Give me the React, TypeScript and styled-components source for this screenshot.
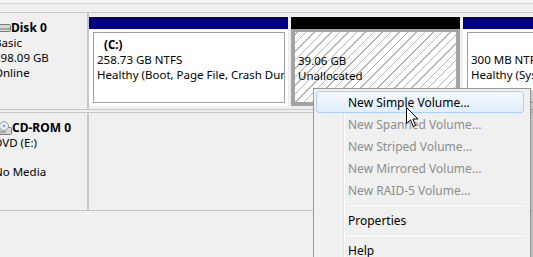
import React from "react";
import styled, { createGlobalStyle } from "styled-components";

const Global = createGlobalStyle`
  html, body { margin: 0; padding: 0; background: #f0f0f0; overflow: hidden; }
  body { font-family: "Noto Sans", "Liberation Sans", sans-serif; font-size: 11.5px; color: #000; }
`;

const Page = styled.div`
  position: relative;
  width: 533px;
  height: 257px;
  overflow: hidden;
  background: #f0f0f0;
`;

const TopStrip = styled.div`
  height: 3px;
  background: #f7f7f7;
  border-bottom: 1px solid #d5d5d5;
  margin-bottom: 8px;
`;

const Shift = styled.div`
  margin-left: -14px;
  display: flex;
  flex-direction: column;
  gap: 2px;
`;

const DiskRow = styled.div<{ $h: number }>`
  display: flex;
  height: ${(p) => p.$h}px;
  border-top: 1px solid #c8c8c8;
  border-bottom: 1px solid #c8c8c8;
`;

const Label = styled.div`
  width: 103px;
  flex: none;
  background: #f0f0f0;
  border-right: 2px solid #c8c8c8;
  padding: 7px 0 0 8px;
  box-sizing: border-box;
  line-height: 15px;
  white-space: nowrap;
`;

const LabelTitle = styled.div<{ $indent: number }>`
  display: flex;
  align-items: center;
  font-weight: bold;
  font-size: 12px;
  padding-left: ${(p) => p.$indent}px;
`;

const IconBox = styled.span`
  width: 16px;
  height: 15px;
  display: inline-flex;
  align-items: center;
  justify-content: center;
`;

const Blank = styled.div`
  height: 14px;
`;

const Volumes = styled.div`
  flex: 1;
  display: flex;
  gap: 3px;
  padding: 4px 0 3px 0;
  background: #f0f0f0;
  overflow: hidden;
`;

const EmptyArea = styled.div`
  flex: 1;
  background: #f0f0f0;
`;

const Partition = styled.div<{ $w: number }>`
  width: ${(p) => p.$w}px;
  flex: none;
  display: flex;
  flex-direction: column;
`;

const Bar = styled.div<{ $c: string }>`
  height: 12px;
  background: ${(p) => p.$c};
`;

const Body = styled.div`
  flex: 1;
  background: #ffffff;
  padding: 3px 3px 3px 4px;
  display: flex;
`;

const SelBody = styled.div`
  flex: 1;
  border: 4px solid #a3a3a3;
  border-top-width: 3px;
  background-color: #ffffff;
  background-image: repeating-linear-gradient(
    -45deg,
    transparent 0px,
    transparent 5px,
    #b4b4b4 5px,
    #b4b4b4 6px
  );
  padding: 21px 0 0 3px;
  line-height: 15px;
  white-space: nowrap;
  overflow: hidden;
`;

const Inner = styled.div`
  flex: 1;
  border: 1px solid #a0a0a0;
  padding: 4px 0 0 3px;
  line-height: 15px;
  white-space: nowrap;
  overflow: hidden;
`;

const VolName = styled.div`
  font-weight: bold;
  padding-left: 7px;
  height: 15px;
`;

const Menu = styled.div`
  position: absolute;
  left: 313px;
  top: 88px;
  width: 218px;
  background: #f0f0f0;
  border: 1px solid #979797;
  padding: 2px;
  box-shadow: 2px 2px 2px rgba(0, 0, 0, 0.25);
  box-sizing: border-box;
  font-size: 12px;
`;

const Gutter = styled.div`
  position: absolute;
  left: 29px;
  top: 0;
  bottom: 0;
  width: 1px;
  background: #e2e3e3;
  border-right: 1px solid #ffffff;
`;

const Item = styled.div<{ $disabled?: boolean; $hot?: boolean }>`
  position: relative;
  height: 22px;
  line-height: 20px;
  padding: 1px 0 0 31px;
  box-sizing: border-box;
  color: ${(p) => (p.$disabled ? "#8d8d8d" : "#000")};
  border: 1px solid ${(p) => (p.$hot ? "#aecff7" : "transparent")};
  border-radius: 3px;
  background: ${(p) =>
    p.$hot ? "linear-gradient(to bottom, #f2f8fd, #e3effc)" : "transparent"};
  margin-right: 4px;
`;

const Sep = styled.div`
  position: relative;
  height: 8px;
  margin-left: 30px;
  margin-right: 4px;
  &::after {
    content: "";
    position: absolute;
    left: 0;
    right: 0;
    top: 3px;
    height: 1px;
    background: #e2e3e3;
    border-bottom: 1px solid #ffffff;
  }
`;

const Cursor = styled.svg`
  position: absolute;
  left: 406px;
  top: 107px;
`;

const DiskIcon = () => (
  <svg width="16" height="10" viewBox="0 0 16 10">
    <rect x="0.5" y="1.5" width="15" height="7" rx="1" fill="#d8d8d8" stroke="#7a7a7a" />
    <rect x="2" y="5" width="10" height="2" fill="#a8a8a8" />
    <rect x="12.5" y="5" width="2" height="2" fill="#3bbf3b" />
  </svg>
);

const CdIcon = () => (
  <svg width="16" height="14" viewBox="0 0 16 14">
    <rect x="0.5" y="6.5" width="15" height="7" rx="1" fill="#d8d8d8" stroke="#7a7a7a" />
    <circle cx="8" cy="5" r="4.5" fill="#e8eef4" stroke="#8a9aa8" />
    <circle cx="8" cy="5" r="1.2" fill="#8a9aa8" />
    <rect x="2" y="10" width="8" height="2" fill="#a8a8a8" />
  </svg>
);

export default function App() {
  return (
    <>
      <Global />
      <Page>
        <TopStrip />
        <Shift>
          <DiskRow $h={96}>
            <Label>
              <LabelTitle $indent={1}>
                <IconBox>
                  <DiskIcon />
                </IconBox>
                Disk 0
              </LabelTitle>
              <div>Basic</div>
              <div>298.09 GB</div>
              <div>Online</div>
            </Label>
            <Volumes>
              <Partition $w={199}>
                <Bar $c="#000080" />
                <Body>
                  <Inner>
                    <VolName>(C:)</VolName>
                    <div>258.73 GB NTFS</div>
                    <div>Healthy (Boot, Page File, Crash Dump, Primary Partition)</div>
                  </Inner>
                </Body>
              </Partition>
              <Partition $w={169}>
                <Bar $c="#000000" />
                <SelBody>
                  <div>39.06 GB</div>
                  <div>Unallocated</div>
                </SelBody>
              </Partition>
              <Partition $w={140}>
                <Bar $c="#000080" />
                <Body>
                  <Inner>
                    <VolName />
                    <div>300 MB NTFS</div>
                    <div>Healthy (System, Active, Primary Partition)</div>
                  </Inner>
                </Body>
              </Partition>
            </Volumes>
          </DiskRow>
          <DiskRow $h={97}>
            <Label>
              <LabelTitle $indent={2}>
                <IconBox>
                  <CdIcon />
                </IconBox>
                CD-ROM 0
              </LabelTitle>
              <div>DVD (E:)</div>
              <Blank />
              <div>No Media</div>
            </Label>
            <EmptyArea />
          </DiskRow>
        </Shift>
        <Menu>
          <Gutter />
          <Item $hot>New Simple Volume...</Item>
          <Item $disabled>New Spanned Volume...</Item>
          <Item $disabled>New Striped Volume...</Item>
          <Item $disabled>New Mirrored Volume...</Item>
          <Item $disabled>New RAID-5 Volume...</Item>
          <Sep />
          <Item>Properties</Item>
          <Sep />
          <Item>Help</Item>
        </Menu>
        <Cursor width="13" height="21" viewBox="0 0 13 21">
          <path
            d="M0.5 0.5 L0.5 16.5 L4.5 12.8 L7.3 19.5 L9.6 18.5 L6.9 12 L12 12 Z"
            fill="#ffffff"
            stroke="#000000"
            strokeWidth="1"
            strokeLinejoin="miter"
          />
        </Cursor>
      </Page>
    </>
  );
}
